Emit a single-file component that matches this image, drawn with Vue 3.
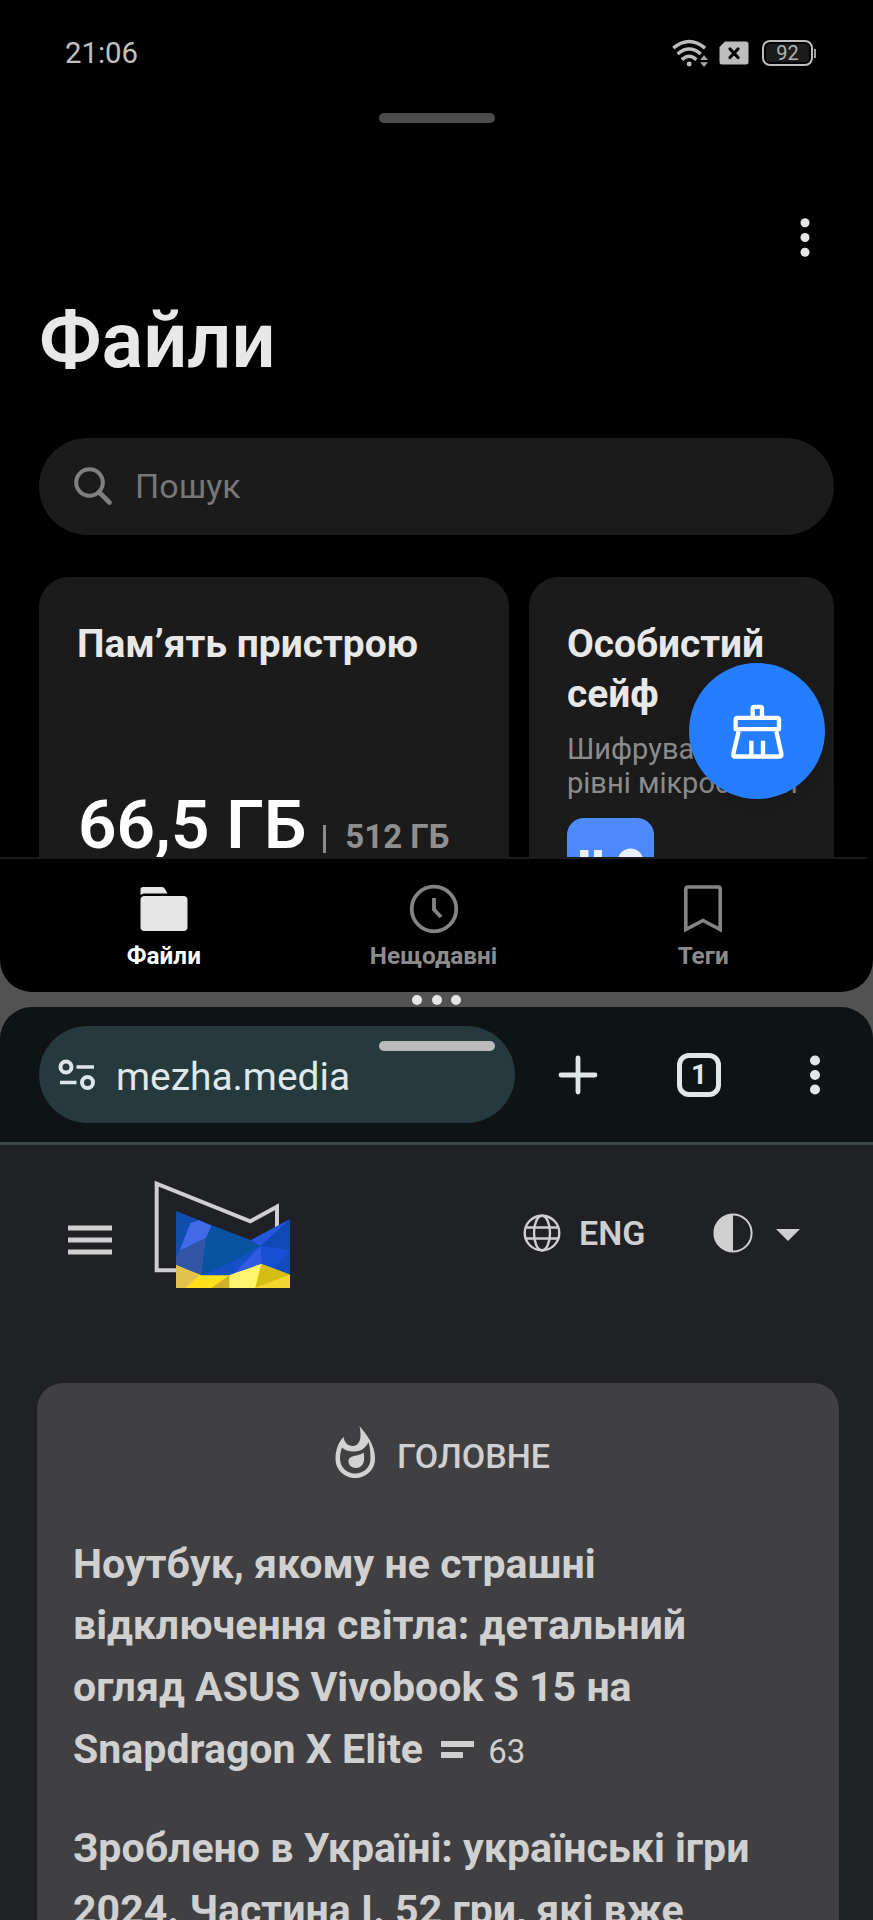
<script setup>
const tabs = [
  { id: 'files', label: 'Файли', active: true },
  { id: 'recent', label: 'Нещодавні', active: false },
  { id: 'tags', label: 'Теги', active: false },
]
</script>

<template>
  <div class="screen">
    <section class="pane files">
      <header class="status">
        <span class="time">21:06</span>
        <div class="indicators">
          <svg class="wifi" viewBox="95 50 112 90">
            <g fill="none" stroke="#bdbdbd" stroke-width="10.500">
              <path d="M99 80Q147 40 195 80" />
              <path d="M112 98Q147 68 182 98" />
              <path d="M125 115Q147 95 169 115" />
            </g>
            <circle cx="147" cy="128" r="7.500" fill="#bdbdbd" />
            <path d="M180 116L192 102L204 116ZM180 123H204L192 137Z" fill="#a5a5a5" />
          </svg>
          <svg class="sim" viewBox="0 0 30 24">
            <path d="M6 0.500H27Q29.500 0.500 29.500 3V21Q29.500 23.500 27 23.500H3Q0.500 23.500 0.500 21V6Z" fill="#bdbdbd" />
            <path d="M11 8L19 16.500M19 8L11 16.500" stroke="#000" stroke-width="3.200" stroke-linecap="round" />
          </svg>
          <div class="battery"><span>92</span></div>
        </div>
      </header>
      <div class="grip"></div>
      <div class="toolbar">
        <svg class="kebab" viewBox="0 0 10 40"><g fill="#e6e6e6"><circle cx="5" cy="5.700" r="4.500" /><circle cx="5" cy="20.500" r="4.500" /><circle cx="5" cy="35.300" r="4.500" /></g></svg>
      </div>
      <h1>Файли</h1>
      <div class="search">
        <svg viewBox="0 0 40 40"><g fill="none" stroke="#808080" stroke-width="4"><circle cx="16.500" cy="16.500" r="13.300" /><path d="M26 26L36.500 36.500" stroke-width="4.600" stroke-linecap="round" /></g></svg>
        <span>Пошук</span>
      </div>
      <div class="cards">
        <article class="card storage">
          <h2>Пам’ять пристрою</h2>
          <p class="amount"><b>66,5 ГБ</b><i></i><span>512 ГБ</span></p>
        </article>
        <article class="card safe">
          <h2>Особистий<br />сейф</h2>
          <p>Шифрування на<br />рівні мікросхеми</p>
          <svg class="tile" viewBox="0 0 87 60">
            <defs><linearGradient id="tileFill" x1="0" y1="0" x2="0" y2="1"><stop offset="0" stop-color="#508bff" /><stop offset="1" stop-color="#4586fb" /></linearGradient></defs>
            <rect width="87" height="87" rx="17" fill="url(#tileFill)" />
            <path d="M13 32H21.500V60H13ZM27 32H35V60H27Z" fill="#e9f0fe" />
            <circle cx="63.500" cy="43.500" r="13" fill="#e9f0fe" />
          </svg>
        </article>
        <button class="fab">
          <svg viewBox="690 430 165 170">
            <g fill="none" stroke="#fff" stroke-width="13" stroke-linejoin="round">
              <path d="M758 474V446Q758 441 763 441H781Q786 441 786 446V474" />
              <path d="M707 508V480Q707 474 713 474H831Q837 474 837 480V508Z" />
              <path d="M716 514L700 582Q698 590 706 590H838Q846 590 844 582L829 514" />
              <path d="M754 543V588M789 543V588" />
            </g>
          </svg>
        </button>
      </div>
      <div class="rule"></div>
      <nav>
        <a v-for="t in tabs" :key="t.id" :class="[t.id, { active: t.active }]">
          <svg v-if="t.id === 'files'" viewBox="0 0 50 50">
            <path d="M1.500 11V5.500Q1.500 3 4 3H23Q25 3 26 5L28.500 9.500H5Q3 9.500 1.500 11Z" fill="#e6e6e6" />
            <rect x="1.500" y="12" width="47" height="35" rx="4" fill="#e6e6e6" />
          </svg>
          <svg v-else-if="t.id === 'recent'" viewBox="0 0 50 50">
            <g fill="none" stroke="#848484" stroke-width="3.800"><circle cx="25" cy="25" r="22.300" /><path d="M25 14V25.500L32 33" /></g>
          </svg>
          <svg v-else viewBox="0 0 50 50">
            <path d="M7.800 45.500V5Q7.800 3 9.800 3H40.200Q42.200 3 42.200 5V45.500L25 36.500Z" fill="none" stroke="#848484" stroke-width="3.600" />
          </svg>
          <span>{{ t.label }}</span>
        </a>
      </nav>
    </section>

    <div class="splitter"><i></i><i></i><i></i></div>

    <section class="pane browser">
      <div class="bar">
        <div class="url">
          <svg viewBox="0 0 38 32"><g fill="none" stroke="#dce6e8" stroke-width="4"><circle cx="8" cy="8" r="5.500" /><circle cx="29.500" cy="23.500" r="5.500" /><path d="M18.500 8H36M2 23.500H18.500" stroke-width="3.500" /></g></svg>
          <span>mezha.media</span>
          <div class="grip light"></div>
        </div>
        <svg class="plus" viewBox="0 0 40 40"><path d="M20 3V37M3 20H37" stroke="#e1e6e7" stroke-width="4.800" stroke-linecap="round" /></svg>
        <div class="tabs">1</div>
        <svg class="kebab" viewBox="0 0 10 40"><g fill="#e1e6e7"><circle cx="5" cy="5.500" r="5" /><circle cx="5" cy="20" r="5" /><circle cx="5" cy="34.500" r="5" /></g></svg>
      </div>
      <div class="site">
        <header class="masthead">
          <svg class="burger" viewBox="0 0 44 30"><path d="M0 3H44M0 15H44M0 27H44" stroke="#cfcfd0" stroke-width="4.900" /></svg>
          <svg class="logo" viewBox="72 60 411 327">
            <path d="M142 331H80V71L361 184L441 140V205" fill="none" stroke="#cfcfd1" stroke-width="12" />
            <path d="M138 154L362 241L480 178V384H138Z" fill="#124db8" />
            <path d="M181 188L207 181L245 197L228 234L148 273Z" fill="#4169e8" />
            <path d="M138 154L207 181L181 188L148 273L138 290Z" fill="#104fae" />
            <path d="M148 273L228 234L214 347L138 315V290Z" fill="#3156a5" />
            <path d="M245 197L362 241L392 258L298 310L214 347L228 234Z" fill="#08529f" />
            <path d="M298 310L392 258L396 312L298 347H214Z" fill="#1450c5" />
            <path d="M362 241L480 178L392 258Z" fill="#2458de" />
            <path d="M392 258L396 312L308 345Z" fill="#315be2" />
            <path d="M392 258L480 270V178Z" fill="#1048b4" />
            <path d="M392 258L480 270L440 330L396 312Z" fill="#164fd2" />
            <path d="M480 270V344L432 325Z" fill="#124bbd" />
            <path d="M138 315L214 346H298L394 312L480 344V384H138Z" fill="#ffe01c" />
            <path d="M138 315L207 346L167 384H138Z" fill="#e2c24d" />
            <path d="M298 346L394 312L376 384H298Z" fill="#fff46b" />
            <path d="M298 346V384H244Z" fill="#cfb02d" />
            <path d="M394 312L480 344L376 384Z" fill="#d6bd16" />
            <path d="M480 344V384H376Z" fill="#f2d530" />
          </svg>
          <svg class="globe" viewBox="0 0 38 38"><g fill="none" stroke="#cfcfd0" stroke-width="2.400"><circle cx="19" cy="19" r="17.300" /><ellipse cx="19" cy="19" rx="8" ry="17.300" /><path d="M3 13.500H35M3 24.500H35" /></g></svg>
          <span class="lang">ENG</span>
          <svg class="theme" viewBox="0 0 40 40"><circle cx="20" cy="20" r="18.600" fill="none" stroke="#cfcfd0" stroke-width="2" /><path d="M20 1A19 19 0 0 0 20 39Z" fill="#cfcfd0" /></svg>
          <svg class="caret" viewBox="0 0 24 12"><path d="M0 0H24L12 12Z" fill="#cfcfd0" /></svg>
        </header>
        <main class="news">
          <h3>
            <svg viewBox="0 0 40 54">
              <path fill-rule="evenodd" d="M24.500 1C32 10 40 20 40 33.500C40 45 31 53 20.200 53C9.500 53 0.500 45 0.500 33.500C0.500 25 3.500 17 8.500 12C9.500 17 12 21 18 21C25 21 27 12 24.500 1ZM33.500 17C30.500 23.500 25.500 26.500 19 26.500C13.500 26.500 9.500 25 7 22.500C5.500 27 5 30 5 33.500C5 42 11.500 48.500 20.200 48.500C29 48.500 35.500 42 35.500 33.500C35.500 27 35 22 33.500 17Z" fill="#d2d2d3" />
              <path d="M28.500 27.500C30.500 36 28 43 21 43C16.500 43 13.500 40 13.500 36.500C13.500 29.500 23 32 28.500 27.500Z" fill="#d2d2d3" />
            </svg>
            <span>ГОЛОВНЕ</span>
          </h3>
          <p>Ноутбук, якому не страшні<br />відключення світла: детальний<br />огляд ASUS Vivobook S 15 на<br />Snapdragon X Elite <svg class="lines" viewBox="0 0 33 17"><path d="M0 0H33V6H0ZM0 11H22V17H0Z" fill="#d0d0d1" /></svg><span class="count">63</span></p>
          <p>Зроблено в Україні: українські ігри<br />2024. Частина І. 52 гри, які вже</p>
        </main>
      </div>
    </section>
  </div>
</template>

<style>
body {
  background: #525252;
}
</style>

<style scoped>
.screen {
  width: 873px;
  height: 1920px;
  overflow: hidden;
  background: #525252;
  font-family: Roboto, "Noto Sans", sans-serif;
  color: #e8e8e8;
}
.screen * { box-sizing: border-box; }
svg { display: block; flex: none; }
h1, h2, h3, p { margin: 0; white-space: nowrap; }
.pane { overflow: hidden; }
.files { height: 992px; background: #000; border-radius: 0 0 32px 32px; }

.status { height: 106px; padding: 0 57px 0 65px; display: flex; align-items: center; justify-content: space-between; }
.time { font-size: 29.300px; color: #c0c0c0; }
.indicators { display: flex; align-items: center; }
.wifi { width: 37px; height: 30px; margin-right: 10px; }
.sim { width: 30px; height: 24px; margin-right: 13px; }
.battery { position: relative; width: 51px; height: 26px; margin-right: 3px; border: 2px solid #bdbdbd; border-radius: 8px; padding: 2px; }
.battery span { display: block; height: 18px; border-radius: 4px; background: #1c1c1c; color: #b4b4b4; font-size: 20px; line-height: 19px; text-align: center; }
.battery::after { content: ""; position: absolute; right: -5px; top: 7px; width: 2px; height: 9px; background: #a0a0a0; }

.grip { width: 116px; height: 10px; margin: 6.500px auto 0; border-radius: 5px; background: #4c4c4c; }
.toolbar { display: flex; justify-content: flex-end; padding: 94.500px 63px 0 0; }
.kebab { width: 10px; height: 40px; }
h1 { margin: 39px 0 0 39px; font-size: 77.500px; line-height: 90px; font-weight: 600; }

.search { display: flex; align-items: center; margin: 52px 39px 0; height: 97px; padding-left: 34px; border-radius: 49px; background: #1b1b1b; }
.search svg { width: 40px; height: 40px; margin-top: -2px; }
.search span { margin: -1px 0 0 22px; font-size: 34px; color: #777; }

.cards { position: relative; display: flex; gap: 20px; height: 280px; margin: 42px 39px 0; }
.card { overflow: hidden; padding: 42px 0 0 38px; border-radius: 30px 30px 0 0; background: #1b1b1b; }
.storage { width: 470px; }
.safe { width: 305px; }
h2 { font-size: 38.900px; line-height: 50px; font-weight: 700; }
.amount { display: flex; align-items: baseline; margin-top: 116px; line-height: 80px; }
.amount b { margin-left: 1px; font-size: 67.500px; font-weight: 600; color: #fff; }
.amount i { align-self: center; width: 3px; height: 28px; margin: 15px 19px 0 17px; background: #8c8c8c; }
.amount span { font-size: 33px; font-weight: 700; color: #8f8f8f; }
.safe p { margin-top: 13px; font-size: 29px; line-height: 34px; color: #8c8c8c; }
.tile { width: 87px; height: 60px; margin-top: 18px; }
.fab { position: absolute; left: 650px; top: 86px; width: 136px; height: 136px; padding: 0; border: 0; border-radius: 50%; background: #257dff; box-shadow: 0 6px 24px rgba(0, 0, 0, .15); }
.fab svg { width: 55px; height: 57px; margin: 0 auto; }
.rule { width: 867px; height: 2px; background: #1b1b1b; }

nav { display: flex; padding: 25px 35px 0 29px; }
nav a { flex: 1; display: flex; flex-direction: column; align-items: center; color: #8c8c8c; }
nav svg { width: 50px; height: 50px; }
nav span { margin-top: 7px; font-size: 24.300px; line-height: 30px; font-weight: 700; }
nav .active { color: #fff; }

.splitter { height: 15px; display: flex; justify-content: center; align-items: center; gap: 9.500px; }
.splitter i { width: 10px; height: 10px; border-radius: 50%; background: #e6e6e6; }

.browser { height: 913px; border-radius: 32px 32px 0 0; background: #0e1316; }
.bar { display: flex; align-items: center; height: 138px; padding: 0 53px 0 39px; border-bottom: 3px solid #3b484b; }
.url { position: relative; display: flex; align-items: center; width: 476px; height: 97px; padding-left: 19px; border-radius: 49px; background: #263a3e; }
.url > svg { width: 38px; height: 32px; }
.url span { margin: 3px 0 0 20px; font-size: 38.900px; color: #dfe8ea; }
.grip.light { position: absolute; left: 339.500px; top: 15px; margin: 0; background: #bbb; }
.plus { width: 40px; height: 40px; margin-left: 43px; }
.tabs { width: 44px; height: 44px; margin: 0 89px 0 79px; border: 5px solid #e1e6e7; border-radius: 12px; color: #e1e6e7; font-size: 28px; font-weight: 700; line-height: 34px; text-align: center; }

.site { height: 775px; background: #202124; }
.masthead { display: flex; align-items: center; height: 238px; padding: 0 73px 58px 68px; }
.burger { width: 44px; height: 30px; margin-top: 9px; }
.logo { width: 137px; height: 109px; margin: -1px 0 0 42px; }
.globe { width: 38px; height: 38px; margin: -4px 0 0 232px; }
.lang { margin: -5px 0 0 18px; font-size: 34px; font-weight: 600; color: #cfcfd0; }
.theme { width: 40px; height: 40px; margin: -4px 0 0 auto; }
.caret { width: 24px; height: 12px; margin: 0 0 0 23px; }

.news { width: 802px; height: 537px; margin-left: 37px; padding: 41px 0 0 36px; border-radius: 26px 26px 0 0; background: #404042; color: #d0d0d1; overflow: hidden; }
h3 { display: flex; align-items: center; margin-left: 262px; height: 54px; font-size: 34px; font-weight: 500; }
h3 svg { width: 40px; height: 54px; margin-top: 2px; }
h3 span { margin: 9px 0 0 22px; }
.news p { font-size: 41.080px; line-height: 61.700px; font-weight: 700; margin-top: 55.500px; }
.news p + p { margin-top: 36px; }
.lines { display: inline-block; width: 33px; height: 17px; margin: 0 14px 5px 8px; }
.count { font-size: 33px; font-weight: 400; }
</style>
